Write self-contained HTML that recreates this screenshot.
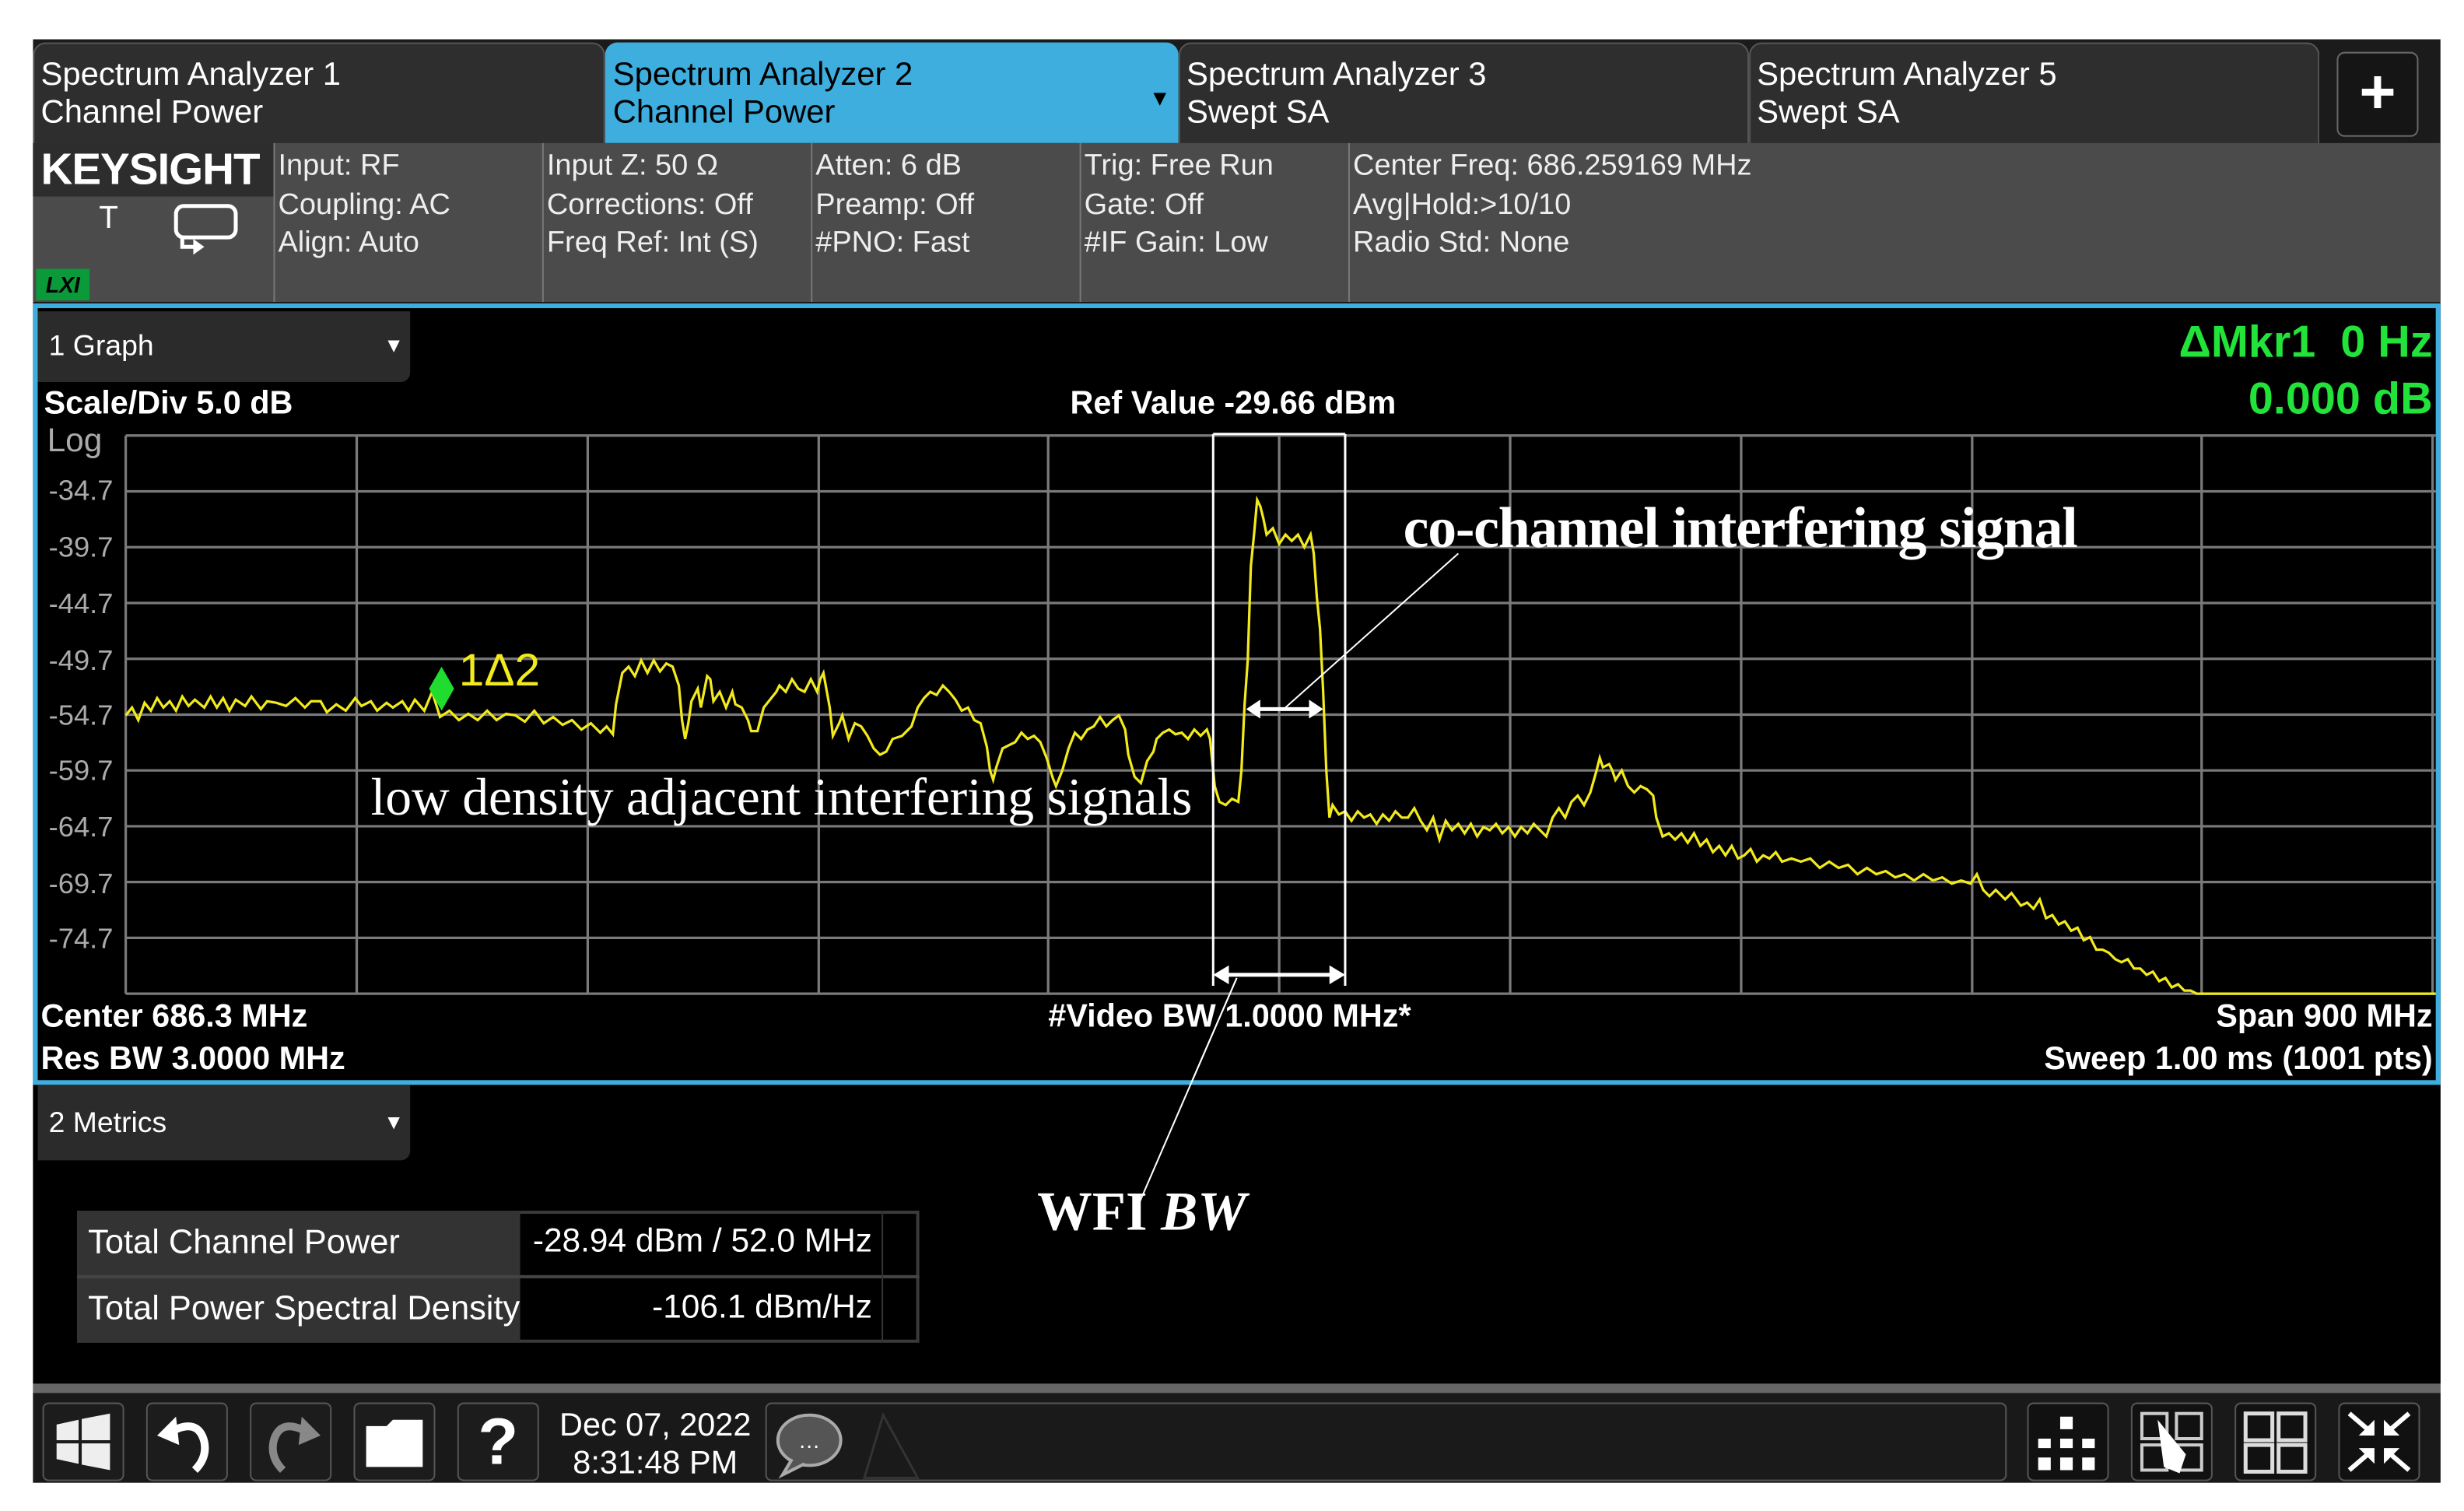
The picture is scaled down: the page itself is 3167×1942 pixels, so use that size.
<!DOCTYPE html>
<html><head><meta charset="utf-8">
<style>
html,body{margin:0;padding:0;background:#fff;overflow:hidden;width:3167px;height:1942px}
#s{position:absolute;left:0;top:0;width:1568px;height:961px;transform:scale(2.0198,2.0208);transform-origin:0 0;font-family:"Liberation Sans",sans-serif;color:#fff}
.a{position:absolute}
.tab{position:absolute;top:27px;height:64px;background:#2e2e2e;border-radius:8px 8px 0 0;border:1px solid #555;border-bottom:none;box-sizing:border-box;font-size:20.7px;line-height:24px;padding:8px 0 0 4px}
.cell{position:absolute;top:91px;height:101px;border-left:1px solid #777;box-sizing:border-box;font-size:18.8px;line-height:24.5px;padding:2px 0 0 2px;color:#eee}
.b{font-weight:bold;font-size:20.5px}
.yl{position:absolute;left:31px;font-size:18px;color:#aaa}
.btn{position:absolute;top:892px;width:52px;height:50px;background:#1c1c1c;border:1px solid #555;border-radius:4px;box-sizing:border-box}
.serif{font-family:"Liberation Serif",serif;color:#fff}
</style></head><body><div id="s">
<div class="a" style="left:21px;top:25px;width:1532px;height:918px;background:#1b1b1b"></div>
<div class="tab" style="left:21px;width:364px">Spectrum Analyzer 1<br>Channel Power</div>
<div class="tab" style="left:385px;width:365px;background:#3eaedf;color:#000;border-color:#3eaedf">Spectrum Analyzer 2<br>Channel Power<span class="a" style="right:4px;top:22px;font-size:14px">▼</span></div>
<div class="tab" style="left:750px;width:363px">Spectrum Analyzer 3<br>Swept SA</div>
<div class="tab" style="left:1113px;width:363px">Spectrum Analyzer 5<br>Swept SA</div>
<div class="a" style="left:1487px;top:33px;width:52px;height:54px;border:1px solid #666;border-radius:5px;box-sizing:border-box;background:#151515;font-size:40px;font-weight:bold;text-align:center;line-height:50px">+</div>
<div class="a" style="left:21px;top:91px;width:1532px;height:101px;background:#4b4b4b"></div>
<div class="a" style="left:21px;top:91px;width:153px;height:34px;background:#2d2d2d;font-weight:bold;font-size:28px;line-height:34px;padding-left:5px;box-sizing:border-box;letter-spacing:-0.5px">KEYSIGHT</div>
<div class="a" style="left:63px;top:128px;font-size:20px">T</div>
<svg class="a" style="left:108px;top:128px" width="46" height="34" viewBox="0 0 46 34"><rect x="4" y="3" width="38" height="20" rx="5" fill="none" stroke="#fff" stroke-width="2.5"/><path d="M8 23 L8 29 L16 29" fill="none" stroke="#fff" stroke-width="2.5"/><path d="M15 24 L22 29 L15 34 Z" fill="#fff"/></svg>
<div class="a" style="left:23px;top:171px;width:34px;height:20px;background:#0a9a3a;color:#000;font-size:14px;font-style:italic;font-weight:bold;text-align:center;line-height:20px">LXI</div>
<div class="cell" style="left:174px;width:171px">Input: RF<br>Coupling: AC<br>Align: Auto</div>
<div class="cell" style="left:345px;width:171px">Input Z: 50 Ω<br>Corrections: Off<br>Freq Ref: Int (S)</div>
<div class="cell" style="left:516px;width:171px">Atten: 6 dB<br>Preamp: Off<br>#PNO: Fast</div>
<div class="cell" style="left:687px;width:171px">Trig: Free Run<br>Gate: Off<br>#IF Gain: Low</div>
<div class="cell" style="left:858px;width:695px">Center Freq: 686.259169 MHz<br>Avg|Hold:&gt;10/10<br>Radio Std: None</div>
<div class="a" style="left:21px;top:193px;width:1532px;height:497px;background:#000;border:3px solid #3eaedf;box-sizing:border-box"></div>
<div class="a" style="left:24px;top:198px;width:237px;height:45px;background:#2b2b2b;border-radius:0 0 6px 0;font-size:18.5px;line-height:44px;padding-left:7px;box-sizing:border-box">1 Graph<span class="a" style="right:4px;top:0;font-size:13px">▼</span></div>
<div class="a" style="right:20px;top:200px;color:#22e33a;font-weight:bold;font-size:28.5px;text-align:right;line-height:36px">ΔMkr1&nbsp; 0 Hz<br>0.000 dB</div>
<div class="a b" style="left:28px;top:245px">Scale/Div 5.0 dB</div>
<div class="a b" style="left:681px;top:245px">Ref Value -29.66 dBm</div>
<div class="a" style="left:30px;top:269px;font-size:21px;color:#aaa">Log</div>
<div class="yl" style="top:302px">-34.7</div><div class="yl" style="top:338px">-39.7</div><div class="yl" style="top:374px">-44.7</div><div class="yl" style="top:410px">-49.7</div><div class="yl" style="top:445px">-54.7</div><div class="yl" style="top:480px">-59.7</div><div class="yl" style="top:516px">-64.7</div><div class="yl" style="top:552px">-69.7</div><div class="yl" style="top:587px">-74.7</div>
<svg class="a" style="left:0;top:0" width="1568" height="961" viewBox="0 0 1568 961">
<g stroke="#7a7a7a" stroke-width="1.6" fill="none">
<path d="M80 277H1550M80 312.5H1550M80 348H1550M80 383.5H1550M80 419H1550M80 454.5H1550M80 490H1550M80 525.5H1550M80 561H1550M80 596.5H1550M80 632H1550"/>
<path d="M80 277V632M227 277V632M374 277V632M521 277V632M667 277V632M814 277V632M961 277V632M1108 277V632M1255 277V632M1401 277V632M1548 277V632"/>
</g>
<polyline fill="none" stroke="#f2ea1c" stroke-width="1.6" points="80,455 84,450 88,458 92,447 96,452 100,444 104,450 108,446 112,452 116,443 120,449 124,445 130,450 134,443 138,450 142,444 146,452 150,445 156,449 160,443 166,451 170,446 176,447 182,449 188,444 194,450 198,446 204,446 208,453 214,448 220,452 226,444 230,449 236,446 240,452 246,447 250,450 256,446 260,452 264,445 270,452 275,440 280,456 286,452 292,458 298,454 304,458 310,452 316,458 322,454 328,455 334,459 340,452 346,460 352,456 358,461 364,458 370,464 376,460 382,466 386,462 390,467 392,448 396,428 400,424 404,430 408,420 412,428 416,420 420,427 424,422 428,424 432,436 434,458 436,470 438,460 440,446 444,438 446,450 448,440 450,430 452,432 454,446 458,440 462,450 466,440 468,448 472,450 476,458 478,465 482,465 486,450 490,445 494,440 496,436 500,440 504,432 508,438 512,440 516,432 520,440 522,432 524,428 528,450 530,468 534,460 536,455 540,470 544,460 548,462 552,468 556,476 560,480 564,478 568,470 574,468 580,462 584,450 588,444 592,440 596,442 600,436 604,440 608,445 612,452 616,450 620,458 624,460 628,475 630,490 632,496 634,488 638,476 642,474 646,472 650,466 654,470 658,468 662,472 666,482 670,495 672,500 676,490 680,476 684,466 688,470 692,464 696,462 700,456 704,462 708,458 712,455 716,464 718,480 722,494 726,498 730,484 734,478 736,470 740,466 744,464 748,467 752,466 756,470 760,464 764,468 768,464 770,470 773,500 776,510 780,512 784,508 788,510 790,490 792,448 794,420 796,360 798,340 800,318 802,322 804,330 806,340 810,336 814,346 818,340 822,344 826,340 830,348 834,340 836,352 838,380 840,400 842,440 844,490 846,520 848,512 852,518 856,516 860,522 864,516 868,520 872,518 876,524 880,518 884,522 888,516 892,520 896,520 900,514 904,522 908,528 912,520 916,534 920,522 924,528 928,524 932,530 936,524 940,532 944,526 948,528 952,524 956,530 960,526 964,532 968,526 972,530 976,524 980,528 984,532 988,520 992,514 996,520 1000,510 1004,506 1008,512 1012,504 1016,490 1018,482 1020,488 1024,486 1026,490 1028,496 1032,490 1036,500 1040,504 1044,500 1048,502 1052,506 1054,520 1058,532 1062,530 1066,534 1070,530 1074,536 1078,530 1082,538 1086,534 1090,542 1094,538 1098,544 1102,538 1106,546 1110,544 1114,540 1118,548 1122,544 1126,546 1130,542 1134,548 1140,546 1146,548 1152,546 1158,552 1164,548 1170,552 1176,550 1182,556 1188,552 1194,556 1200,554 1206,558 1212,556 1218,560 1224,556 1230,560 1236,558 1242,562 1248,560 1254,562 1258,556 1262,566 1266,570 1270,566 1276,572 1280,568 1286,576 1290,574 1294,578 1298,572 1302,584 1306,582 1310,588 1314,586 1318,592 1322,590 1326,598 1330,596 1334,604 1338,604 1342,606 1346,610 1350,612 1354,610 1358,616 1362,616 1366,620 1370,618 1374,624 1378,622 1382,628 1386,626 1390,630 1394,630 1398,632 1550,632"/>
<g stroke="#fff" fill="none" stroke-width="1.5">
<path d="M772 276V627M856 276V627M772 276H856"/>
<path d="M797 451H838M776 620H852" stroke-width="2.5"/>
<path d="M928 352L818 450M787 622L725 765" stroke-width="1"/>
</g>
<g fill="#fff"><path d="M793 451l9-6v12zM842 451l-9-6v12zM772 620l10-6v12zM856 620l-10-6v12z"/></g>
<path d="M281 424L289 438L281 452L273 438Z" fill="#1fdc2f"/>
</svg>
<div class="a" style="left:292px;top:411px;font-size:29px;color:#f2ea1c">1Δ2</div>
<div class="a serif" style="left:893px;top:314px;font-size:36.5px;font-weight:bold;letter-spacing:-0.6px">co-channel interfering signal</div>
<div class="a serif" style="left:236px;top:489px;font-size:33.5px;letter-spacing:-0.1px">low density adjacent interfering signals</div>
<div class="a b" style="left:26px;top:635px">Center 686.3 MHz</div>
<div class="a b" style="left:26px;top:662px">Res BW 3.0000 MHz</div>
<div class="a b" style="left:667px;top:635px">#Video BW 1.0000 MHz*</div>
<div class="a b" style="right:20px;top:635px;text-align:right">Span 900 MHz</div>
<div class="a b" style="right:20px;top:662px;text-align:right">Sweep 1.00 ms (1001 pts)</div>
<div class="a" style="left:21px;top:690px;width:1532px;height:190px;background:#000"></div>
<div class="a" style="left:24px;top:690px;width:237px;height:48px;background:#2b2b2b;border-radius:0 0 6px 0;font-size:18.5px;line-height:48px;padding-left:7px;box-sizing:border-box">2 Metrics<span class="a" style="right:4px;top:0;font-size:13px">▼</span></div>
<svg class="a" style="left:0;top:0" width="1568" height="961" viewBox="0 0 1568 961"><path d="M787 622L725 765" stroke="#fff" stroke-width="1"/></svg>
<div class="a serif" style="left:660px;top:751px;font-size:35px;font-weight:bold">WFI <i>BW</i></div>
<div class="a" style="left:49px;top:770px;width:536px;height:84px;border:2px solid #3a3a3a;box-sizing:border-box;background:#000"></div>
<div class="a" style="left:49px;top:770px;width:282px;height:84px;background:#333"></div>
<div class="a" style="left:49px;top:811px;width:536px;height:2px;background:#444"></div>
<div class="a" style="left:561px;top:770px;width:1px;height:84px;background:#333"></div>
<div class="a" style="left:56px;top:778px;font-size:21.5px">Total Channel Power</div>
<div class="a" style="left:56px;top:820px;font-size:21.5px">Total Power Spectral Density</div>
<div class="a" style="right:1013px;top:778px;font-size:21px">-28.94 dBm / 52.0 MHz</div>
<div class="a" style="right:1013px;top:820px;font-size:21px">-106.1 dBm/Hz</div>
<div class="a" style="left:21px;top:880px;width:1532px;height:6px;background:#666"></div>
<div class="a" style="left:21px;top:886px;width:1532px;height:57px;background:#191919"></div>
<div class="btn" style="left:27px"><svg width="50" height="48"><path d="M8 13L22 10V23H8ZM24 9.5L42 6V23H24ZM8 25H22V38L8 35ZM24 25H42V42L24 38.5Z" fill="#eee"/></svg></div>
<div class="btn" style="left:93px"><svg width="50" height="48"><path d="M14 18 Q32 8 36 24 Q38 34 30 42" fill="none" stroke="#fff" stroke-width="5"/><path d="M6 20L18 8L20 26Z" fill="#fff"/></svg></div>
<div class="btn" style="left:159px"><svg width="50" height="48"><path d="M36 18 Q18 8 14 24 Q12 34 20 42" fill="none" stroke="#888" stroke-width="5"/><path d="M44 20L32 8L30 26Z" fill="#888"/></svg></div>
<div class="btn" style="left:225px"><svg width="50" height="48"><path d="M7 14H20L24 10H43V40H7Z" fill="#fff"/></svg></div>
<div class="btn" style="left:291px;font-size:42px;font-weight:bold;text-align:center;line-height:48px">?</div>
<div class="a" style="left:356px;top:895px;font-size:20.5px;line-height:24px;text-align:center">Dec 07, 2022<br>8:31:48 PM</div>
<div class="a" style="left:487px;top:892px;width:790px;height:50px;border:1px solid #555;border-radius:4px;box-sizing:border-box;background:#1a1a1a"></div>
<svg class="a" style="left:490px;top:894px" width="100" height="48"><ellipse cx="25" cy="22" rx="20" ry="16" fill="#555" stroke="#aaa" stroke-width="2"/><path d="M14 34L8 44L22 37" fill="#555" stroke="#aaa" stroke-width="2"/><text x="25" y="27" fill="#fff" font-size="14" text-anchor="middle" font-family="Liberation Sans">…</text><path d="M72 6L60 46H94Z" fill="none" stroke="#333" stroke-width="1.5"/></svg>
<div class="btn" style="left:1290px;background:#111"><svg width="50" height="48"><path d="M20 8h8v8h-8zM6 22h8v6h-8zM20 22h8v6h-8zM34 22h8v6h-8zM6 34h8v8h-8zM20 34h8v8h-8zM34 34h8v8h-8z" fill="#fff"/></svg></div>
<div class="btn" style="left:1356px;background:#111"><svg width="50" height="48"><rect x="6" y="6" width="16" height="16" fill="none" stroke="#ccc" stroke-width="2"/><rect x="28" y="6" width="16" height="16" fill="none" stroke="#ccc" stroke-width="2"/><rect x="6" y="26" width="16" height="16" fill="none" stroke="#ccc" stroke-width="2"/><rect x="28" y="26" width="16" height="16" fill="none" stroke="#ccc" stroke-width="2"/><path d="M16 10L34 32L30 44L20 40Z" fill="#fff"/></svg></div>
<div class="btn" style="left:1422px;background:#111"><svg width="50" height="48"><rect x="6" y="6" width="17" height="17" fill="none" stroke="#ddd" stroke-width="2.5"/><rect x="27" y="6" width="17" height="17" fill="none" stroke="#ddd" stroke-width="2.5"/><rect x="6" y="26" width="17" height="17" fill="none" stroke="#ddd" stroke-width="2.5"/><rect x="27" y="26" width="17" height="17" fill="none" stroke="#ddd" stroke-width="2.5"/></svg></div>
<div class="btn" style="left:1488px;background:#111"><svg width="50" height="48"><path d="M6 6L20 18M44 6L30 18M6 42L20 30M44 42L30 30" stroke="#fff" stroke-width="3"/><path d="M22 20L12 20L22 10ZM28 20L38 20L28 10ZM22 28L12 28L22 38ZM28 28L38 28L28 38Z" fill="#fff"/></svg></div>
</div></body></html>
